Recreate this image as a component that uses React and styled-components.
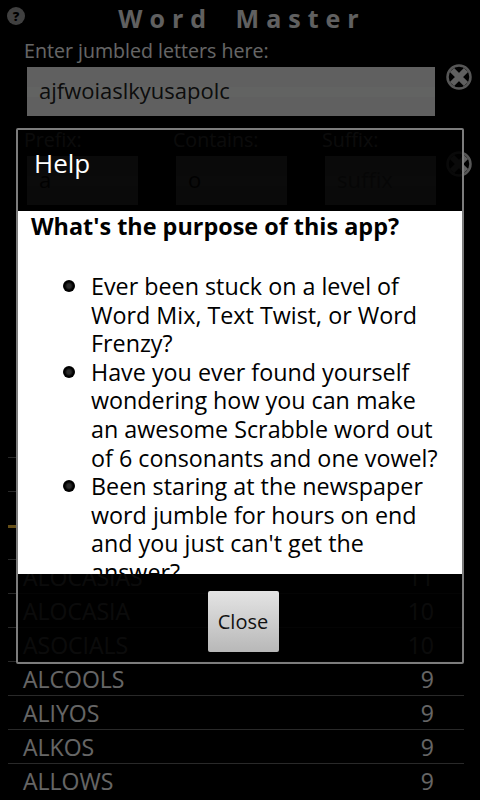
import React from 'react'
import styled, { createGlobalStyle } from 'styled-components'

const GlobalStyle = createGlobalStyle`
    html, body {
        margin: 0;
        padding: 0;
        background: #000;
        font-family: "Open Sans", "Noto Sans", sans-serif;
    }
    * {
        box-sizing: border-box;
    }
`

const Screen = styled.div`
    position: relative;
    width: 480px;
    height: 800px;
    overflow: hidden;
    background: #000;
    color: #fff;
`

const Header = styled.div`
    display: flex;
    align-items: center;
    height: 36px;
    padding-left: 7px;
`

const HelpIcon = styled.div`
    width: 18px;
    height: 18px;
    border-radius: 50%;
    background: #a0a0a0;
    color: #000;
    font-size: 13px;
    font-weight: 800;
    line-height: 18px;
    text-align: center;
    margin-top: -5px;
`

const Title = styled.h1`
    flex: 1;
    margin: 0 0 0 -21px;
    text-align: center;
    font-size: 25px;
    font-weight: 700;
    letter-spacing: 7px;
    word-spacing: 9px;
    white-space: pre;
    color: #f0f0f0;
`

const FieldRow = styled.div`
    display: flex;
    align-items: flex-start;
    padding-left: 24px;
`

const FieldLabel = styled.div`
    font-size: 19.6px;
    line-height: 30px;
    color: #fff;
    white-space: nowrap;
`

const Field = styled.div`
    width: ${(p) => p.$width}px;
`

const Input = styled.div`
    width: calc(100% - 3px);
    height: 49px;
    margin: 1px 0 0 3px;
    padding-left: 12px;
    font-size: 22px;
    line-height: 47px;
    color: ${(p) => (p.$placeholder ? '#999' : '#222')};
    background: linear-gradient(#eff1ef 0 40%, #f6f8f6 40% 62%, #eff1ef 62%);
`

const FilterRow = styled(FieldRow)`
    margin-top: 9px;
`

const FilterField = styled.div`
    width: ${(p) => p.$width}px;
    margin-right: ${(p) => p.$gap}px;
`

const ClearButton = styled.svg`
    flex: none;
    width: 26px;
    height: 26px;
    margin-left: ${(p) => p.$left}px;
    margin-top: ${(p) => p.$top}px;
`

const WordList = styled.div`
    margin: 252px 16px 0 8px;
`

const WordRow = styled.div`
    display: flex;
    justify-content: space-between;
    align-items: center;
    height: 34px;
    padding: 0 30px 0 15px;
    border-top: 1px solid #666;
    font-size: 23px;
    color: #fff;
`

const MarkedRow = styled(WordRow)`
    border-top: 3px solid #ffc53a;
`

const Backdrop = styled.div`
    position: absolute;
    inset: 0;
    padding: 128px 16px 136px;
    background: rgba(0, 0, 0, 0.6);
`

const Dialog = styled.div`
    display: flex;
    flex-direction: column;
    height: 100%;
    border: 2px solid #7c7c7c;
    border-radius: 2px;
    background: rgba(0, 0, 0, 0.89);
`

const DialogTitle = styled.div`
    flex: none;
    height: 81px;
    padding: 15px 0 0 16px;
    font-size: 26px;
    line-height: 37px;
    color: #fff;
`

const DialogBody = styled.div`
    flex: none;
    height: 363px;
    overflow: hidden;
    padding: 0 13px;
    background: #fff;
    color: #000;
`

const Question = styled.h2`
    margin: 0;
    font-size: 23.4px;
    line-height: 30px;
    font-weight: 700;
`

const Bullets = styled.ul`
    list-style: none;
    margin: 31px 0 0;
    padding: 0 0 0 60px;
`

const Bullet = styled.li`
    position: relative;
    font-size: 23.3px;
    line-height: 28.6px;

    &::before {
        content: '';
        position: absolute;
        left: -28px;
        top: 8px;
        width: 12px;
        height: 12px;
        border-radius: 50%;
        background: radial-gradient(circle, #2c2c2c 0 22%, #000 50%);
    }
`

const DialogFooter = styled.div`
    flex: 1;
    display: flex;
    justify-content: center;
    padding: 17px 0 0 6px;
`

const CloseButton = styled.button`
    width: 71px;
    height: 61px;
    padding: 0;
    border: 0;
    border-radius: 2px;
    background: linear-gradient(#e4e4e4, #b8b8b8);
    font-family: inherit;
    font-size: 20px;
    color: #111;
`

const ClearIcon = ({ left, top }) => (
    <ClearButton $left={left} $top={top} viewBox="0 0 26 26">
        <circle cx="13" cy="13" r="11.5" fill="#000" stroke="#d8d8d8" strokeWidth="2.5" />
        <path d="M6 6 L20 20 M20 6 L6 20" stroke="#f0f0f0" strokeWidth="6" />
    </ClearButton>
)

const words = [
    { word: 'ALOCASIAS', score: 11 },
    { word: 'ALOCASIA', score: 10 },
    { word: 'ASOCIALS', score: 10 },
    { word: 'ALCOOLS', score: 9 },
    { word: 'ALIYOS', score: 9 },
    { word: 'ALKOS', score: 9 },
    { word: 'ALLOWS', score: 9 },
]

const filters = [
    { label: 'Prefix:', value: 'a', width: 114, gap: 35 },
    { label: 'Contains:', value: 'o', width: 114, gap: 35 },
    { label: 'Suffix:', value: 'suffix', width: 114, gap: 0, placeholder: true },
]

export default function App() {
    return (
        <Screen>
            <GlobalStyle />
            <Header>
                <HelpIcon>?</HelpIcon>
                <Title>Word Master</Title>
            </Header>

            <FieldRow>
                <Field $width={411}>
                    <FieldLabel>Enter jumbled letters here:</FieldLabel>
                    <Input>ajfwoiaslkyusapolc</Input>
                </Field>
                <ClearIcon left={11} top={28} />
            </FieldRow>

            <FilterRow>
                {filters.map((f) => (
                    <FilterField key={f.label} $width={f.width} $gap={f.gap}>
                        <FieldLabel>{f.label}</FieldLabel>
                        <Input $placeholder={f.placeholder}>{f.value}</Input>
                    </FilterField>
                ))}
                <ClearIcon left={10} top={26} />
            </FilterRow>

            <WordList>
                <WordRow />
                <WordRow />
                <MarkedRow />
                {words.map((w) => (
                    <WordRow key={w.word}>
                        <span>{w.word}</span>
                        <span>{w.score}</span>
                    </WordRow>
                ))}
            </WordList>

            <Backdrop>
                <Dialog>
                    <DialogTitle>Help</DialogTitle>
                    <DialogBody>
                        <Question>What's the purpose of this app?</Question>
                        <Bullets>
                            <Bullet>Ever been stuck on a level of Word Mix, Text Twist, or Word Frenzy?</Bullet>
                            <Bullet>Have you ever found yourself wondering how you can make an awesome Scrabble word out of 6 consonants and one vowel?</Bullet>
                            <Bullet>Been staring at the newspaper word jumble for hours on end and you just can't get the answer?</Bullet>
                        </Bullets>
                    </DialogBody>
                    <DialogFooter>
                        <CloseButton>Close</CloseButton>
                    </DialogFooter>
                </Dialog>
            </Backdrop>
        </Screen>
    )
}
